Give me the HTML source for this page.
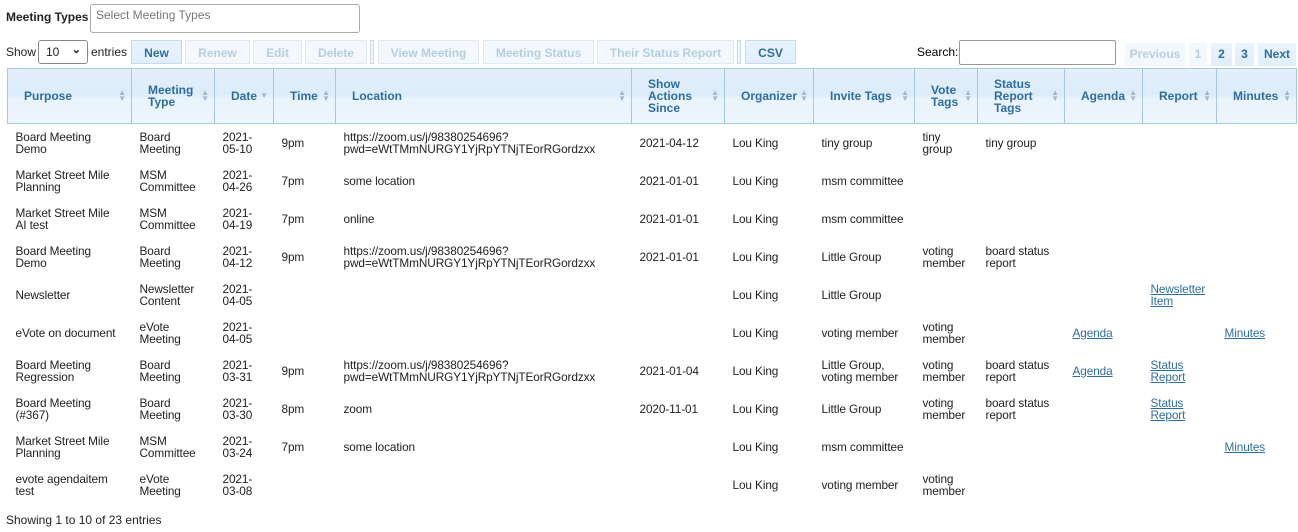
<!DOCTYPE html>
<html><head><meta charset="utf-8"><style>
body{margin:0;background:#fff;font-family:"Liberation Sans",Arial,sans-serif;font-size:12px;color:#222;width:1298px;height:532px;overflow:hidden;position:relative}
.abs{position:absolute}
.btn{position:absolute;top:40px;height:24px;line-height:24px;text-align:center;font-weight:bold;font-size:12px;border:1px solid #c5dbec;background:linear-gradient(#eaf4fd,#e0eefb);color:#2e6e9e;box-sizing:border-box}
.dis{color:#b7cde0;background:#f2f8fd;border-color:#dde9f3}
.sep{position:absolute;top:40px;width:4px;height:24px;border:1px solid #c5dbec;box-sizing:border-box;background:#eef5fc}
table{position:absolute;left:7px;top:68px;width:1289px;border-collapse:collapse;table-layout:fixed}
th{height:55px;background:linear-gradient(#e3f0fb 0%,#dcecfa 45%,#eaf4fd 55%,#edf5fd 100%);border:1px solid #a6c9e2;color:#2e6e9e;font-weight:bold;font-size:12px;line-height:12px;text-align:left;padding:0 16px 0 16px;position:relative;box-sizing:border-box}
th .s{position:absolute;right:5px;top:50%;margin-top:-6px;font-size:8px;line-height:6px;color:#9fb9cf}
td{height:38px;padding:0 8px;line-height:12px;vertical-align:middle;box-sizing:border-box;overflow:hidden;font-size:11.8px;letter-spacing:-0.1px}
a{color:#2e6e9e;text-decoration:underline}
</style></head><body>
<div class="abs" style="left:6px;top:10px;font-weight:bold;">Meeting Types</div>
<div class="abs" style="left:90px;top:4px;width:270px;height:29px;border:1px solid #aaa;border-radius:3px;box-sizing:border-box;color:#777;padding:3px 5px">Select Meeting Types</div>
<div class="abs" style="left:6px;top:45px">Show</div>
<div class="abs" style="left:38px;top:40px;width:50px;height:24px;border:1px solid #888;border-radius:3px;box-sizing:border-box;padding:4px 7px">10<span style="position:absolute;right:6px;top:2px;font-size:11px;font-weight:bold">&#8964;</span></div>
<div class="abs" style="left:91px;top:45px">entries</div>
<div class="btn" style="left:131px;width:51px">New</div>
<div class="btn dis" style="left:185px;width:65px">Renew</div>
<div class="btn dis" style="left:253px;width:49px">Edit</div>
<div class="btn dis" style="left:305px;width:62px">Delete</div>
<div class="sep" style="left:370px"></div>
<div class="btn dis" style="left:378px;width:101px">View Meeting</div>
<div class="btn dis" style="left:483px;width:111px">Meeting Status</div>
<div class="btn dis" style="left:597px;width:137px">Their Status Report</div>
<div class="sep" style="left:737px"></div>
<div class="btn" style="left:745px;width:51px">CSV</div>
<div class="abs" style="left:917px;top:45px;color:#000">Search:</div>
<div class="abs" style="left:959px;top:40px;width:157px;height:25px;border:1px solid #999;border-radius:2px;box-sizing:border-box"></div>
<div class="btn dis" style="left:1125px;top:43px;width:60px;height:23px;line-height:23px;border:none">Previous</div>
<div class="btn dis" style="left:1189px;top:43px;width:18px;height:23px;line-height:23px;border:none">1</div>
<div class="btn" style="left:1211px;top:43px;width:21px;height:23px;line-height:23px;border:none">2</div>
<div class="btn" style="left:1235px;top:43px;width:19px;height:23px;line-height:23px;border:none">3</div>
<div class="btn" style="left:1258px;top:43px;width:38px;height:23px;line-height:23px;border:none">Next</div>
<table>
<colgroup><col style="width:124px"><col style="width:83px"><col style="width:59px"><col style="width:62px"><col style="width:296px"><col style="width:93px"><col style="width:89px"><col style="width:101px"><col style="width:63px"><col style="width:87px"><col style="width:78px"><col style="width:74px"><col style="width:80px"></colgroup>
<tr><th>Purpose<span class="s">&#9650;<br>&#9660;</span></th><th>Meeting Type<span class="s">&#9650;<br>&#9660;</span></th><th>Date<span class="s" style="margin-top:-3px">&#9660;</span></th><th>Time<span class="s">&#9650;<br>&#9660;</span></th><th>Location<span class="s">&#9650;<br>&#9660;</span></th><th>Show Actions Since<span class="s">&#9650;<br>&#9660;</span></th><th>Organizer<span class="s">&#9650;<br>&#9660;</span></th><th>Invite Tags<span class="s">&#9650;<br>&#9660;</span></th><th>Vote Tags<span class="s">&#9650;<br>&#9660;</span></th><th>Status Report Tags<span class="s">&#9650;<br>&#9660;</span></th><th>Agenda<span class="s">&#9650;<br>&#9660;</span></th><th>Report<span class="s">&#9650;<br>&#9660;</span></th><th>Minutes<span class="s">&#9650;<br>&#9660;</span></th></tr>
<tr><td>Board Meeting Demo</td><td>Board Meeting</td><td>2021-05-10</td><td>9pm</td><td>https://zoom.us/j/98380254696?<br>pwd=eWtTMmNURGY1YjRpYTNjTEorRGordzxx</td><td>2021-04-12</td><td>Lou King</td><td>tiny group</td><td>tiny group</td><td>tiny group</td><td></td><td></td><td></td></tr>
<tr><td>Market Street Mile Planning</td><td>MSM Committee</td><td>2021-04-26</td><td>7pm</td><td>some location</td><td>2021-01-01</td><td>Lou King</td><td>msm committee</td><td></td><td></td><td></td><td></td><td></td></tr>
<tr><td>Market Street Mile<br>AI test</td><td>MSM Committee</td><td>2021-04-19</td><td>7pm</td><td>online</td><td>2021-01-01</td><td>Lou King</td><td>msm committee</td><td></td><td></td><td></td><td></td><td></td></tr>
<tr><td>Board Meeting Demo</td><td>Board Meeting</td><td>2021-04-12</td><td>9pm</td><td>https://zoom.us/j/98380254696?<br>pwd=eWtTMmNURGY1YjRpYTNjTEorRGordzxx</td><td>2021-01-01</td><td>Lou King</td><td>Little Group</td><td>voting member</td><td>board status report</td><td></td><td></td><td></td></tr>
<tr><td>Newsletter</td><td>Newsletter Content</td><td>2021-04-05</td><td></td><td></td><td></td><td>Lou King</td><td>Little Group</td><td></td><td></td><td></td><td><a>Newsletter Item</a></td><td></td></tr>
<tr><td>eVote on document</td><td>eVote Meeting</td><td>2021-04-05</td><td></td><td></td><td></td><td>Lou King</td><td>voting member</td><td>voting member</td><td></td><td><a>Agenda</a></td><td></td><td><a>Minutes</a></td></tr>
<tr><td>Board Meeting Regression</td><td>Board Meeting</td><td>2021-03-31</td><td>9pm</td><td>https://zoom.us/j/98380254696?<br>pwd=eWtTMmNURGY1YjRpYTNjTEorRGordzxx</td><td>2021-01-04</td><td>Lou King</td><td>Little Group, voting member</td><td>voting member</td><td>board status report</td><td><a>Agenda</a></td><td><a>Status Report</a></td><td></td></tr>
<tr><td>Board Meeting (#367)</td><td>Board Meeting</td><td>2021-03-30</td><td>8pm</td><td>zoom</td><td>2020-11-01</td><td>Lou King</td><td>Little Group</td><td>voting member</td><td>board status report</td><td></td><td><a>Status Report</a></td><td></td></tr>
<tr><td>Market Street Mile Planning</td><td>MSM Committee</td><td>2021-03-24</td><td>7pm</td><td>some location</td><td></td><td>Lou King</td><td>msm committee</td><td></td><td></td><td></td><td></td><td><a>Minutes</a></td></tr>
<tr><td>evote agendaitem test</td><td>eVote Meeting</td><td>2021-03-08</td><td></td><td></td><td></td><td>Lou King</td><td>voting member</td><td>voting member</td><td></td><td></td><td></td><td></td></tr>
</table>
<div class="abs" style="left:6px;top:513px">Showing 1 to 10 of 23 entries</div>
</body></html>
